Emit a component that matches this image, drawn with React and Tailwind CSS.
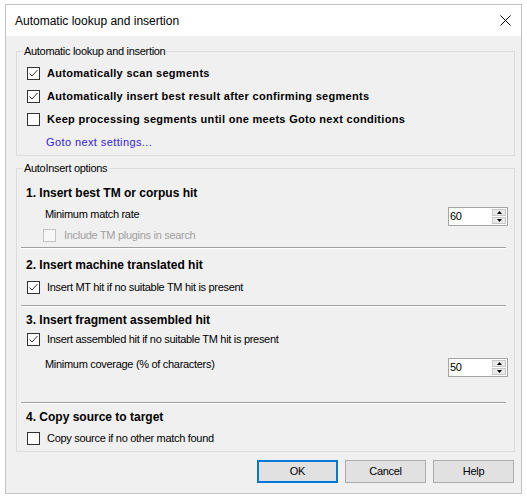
import React from 'react';

const font = { fontFamily: '"Liberation Sans", Arial, sans-serif' };

const CheckBox = ({ checked, disabled }) => (
  <span
    className={
      'flex h-[13px] w-[13px] shrink-0 items-center justify-center border ' +
      (disabled ? 'border-[#c4c4c4] bg-[#f7f7f7]' : 'border-[#333333] bg-white')
    }
  >
    {checked && (
      <svg width="11" height="11" viewBox="0 0 11 11">
        <polyline points="1.5,5.5 4,8 9.5,2" fill="none" stroke="#333" strokeWidth="1" />
      </svg>
    )}
  </span>
);

const Spin = ({ value, className }) => (
  <div className={'flex h-[19px] w-[60px] items-stretch border border-[#a5a5a5] bg-white ' + className}>
    <span className="flex-1 pl-[1px] text-[11px] leading-[17px] tracking-[-0.3px] text-black">{value}</span>
    <div className="my-[1px] mr-[1px] flex w-[14px] flex-col gap-[1px]">
      <div className="flex flex-1 items-center justify-center border border-[#c8c8c8] bg-[#e9e9e9]">
        <svg width="5" height="3" viewBox="0 0 5 3"><polygon points="2.5,0 5,3 0,3" fill="#000" /></svg>
      </div>
      <div className="flex flex-1 items-center justify-center border border-[#c8c8c8] bg-[#e9e9e9]">
        <svg width="5" height="3" viewBox="0 0 5 3"><polygon points="0,0 5,0 2.5,3" fill="#000" /></svg>
      </div>
    </div>
  </div>
);

const Separator = ({ className }) => (
  <div className={'ml-[4px] mr-[8px] border-t border-b border-t-[#a0a0a0] border-b-white ' + className} />
);

const Header = ({ children, className }) => (
  <div className={'flex h-[18px] items-center pl-[9px] text-[12px] font-bold text-black ' + className}>
    {children}
  </div>
);

const Group = ({ title, className, children }) => (
  <div className={'relative border border-[#dcdcdc] ' + className}>
    <span className="absolute -top-[8px] left-[6px] bg-[#f0f0f0] px-[1px] text-[11px] leading-[14px] tracking-[-0.3px] text-black">
      {title}
    </span>
    {children}
  </div>
);

export default function App() {
  return (
    <div className="h-[499px] w-[527px] bg-white pl-[5px] pt-[4px]" style={font}>
      <div className="flex h-[490px] w-[517px] flex-col border border-[#c3c3c3] bg-[#f0f0f0]">
        {/* title bar */}
        <div className="flex h-[31px] items-center justify-between bg-white pl-[9px] pr-[10px]">
          <span className="text-[12px] text-black">Automatic lookup and insertion</span>
          <svg width="11" height="11" viewBox="0 0 11 11">
            <path d="M0.5 0.5 L10.5 10.5 M10.5 0.5 L0.5 10.5" stroke="#000" strokeWidth="1" />
          </svg>
        </div>

        <div className="pl-[10px] pr-[6px]">
          <Group title="Automatic lookup and insertion" className="mt-[15px] pb-[1px] pt-[10px]">
            {[
              ['Automatically scan segments', true],
              ['Automatically insert best result after confirming segments', true],
              ['Keep processing segments until one meets Goto next conditions', false],
            ].map(([label, checked]) => (
              <div key={label} className="flex h-[23px] items-center pl-[10px]">
                <CheckBox checked={checked} />
                <span className="ml-[7px] text-[11px] font-bold tracking-[0.3px] text-black">{label}</span>
              </div>
            ))}
            <div className="flex h-[23px] items-center pl-[29px]">
              <span className="text-[11px] tracking-[0.4px] text-[#3322cc]">Goto next settings...</span>
            </div>
          </Group>

          <Group title="AutoInsert options" className="mt-[12px] pb-[3px] pt-[15px]">
            <Header>1. Insert best TM or corpus hit</Header>
            <div className="flex h-[24px] items-start">
              <span className="pl-[28px] text-[11px] leading-[24px] tracking-[-0.3px] text-black">Minimum match rate</span>
              <Spin value="60" className="ml-auto mr-[6px] mt-[5px]" />
            </div>
            <div className="flex h-[18px] items-center pl-[26px]">
              <CheckBox disabled />
              <span className="ml-[8px] text-[11px] tracking-[-0.3px] text-[#a0a0a0]">Include TM plugins in search</span>
            </div>
            <Separator className="mt-[3px]" />

            <Header className="mt-[7px]">2. Insert machine translated hit</Header>
            <div className="mt-[4px] flex h-[19px] items-center pl-[10px]">
              <CheckBox checked />
              <span className="ml-[7px] text-[11px] tracking-[-0.3px] text-black">Insert MT hit if no suitable TM hit is present</span>
            </div>
            <Separator className="mt-[8px]" />

            <Header className="mt-[4px]">3. Insert fragment assembled hit</Header>
            <div className="flex h-[20px] items-center pl-[10px]">
              <CheckBox checked />
              <span className="ml-[7px] text-[11px] tracking-[-0.3px] text-black">Insert assembled hit if no suitable TM hit is present</span>
            </div>
            <div className="flex h-[28px] items-start">
              <span className="mt-[6px] pl-[28px] text-[11px] leading-[18px] tracking-[-0.3px] text-black">
                Minimum coverage (% of characters)
              </span>
              <Spin value="50" className="ml-auto mr-[6px] mt-[9px]" />
            </div>
            <Separator className="mt-[25px]" />

            <Header className="mt-[4px]">4. Copy source to target</Header>
            <div className="mt-[2px] flex h-[20px] items-center pl-[10px]">
              <CheckBox />
              <span className="ml-[7px] text-[11px] tracking-[-0.3px] text-black">Copy source if no other match found</span>
            </div>
          </Group>

          <div className="mt-[8px] flex justify-end gap-[7px] pr-[1px]">
            <button className="h-[23px] w-[81px] border-2 border-[#0078d7] bg-[#e1e1e1] text-[11px] tracking-[-0.3px] text-black">OK</button>
            <button className="h-[23px] w-[81px] border border-[#adadad] bg-[#e1e1e1] text-[11px] tracking-[-0.3px] text-black">Cancel</button>
            <button className="h-[23px] w-[81px] border border-[#adadad] bg-[#e1e1e1] text-[11px] tracking-[-0.3px] text-black">Help</button>
          </div>
        </div>
      </div>
    </div>
  );
}
